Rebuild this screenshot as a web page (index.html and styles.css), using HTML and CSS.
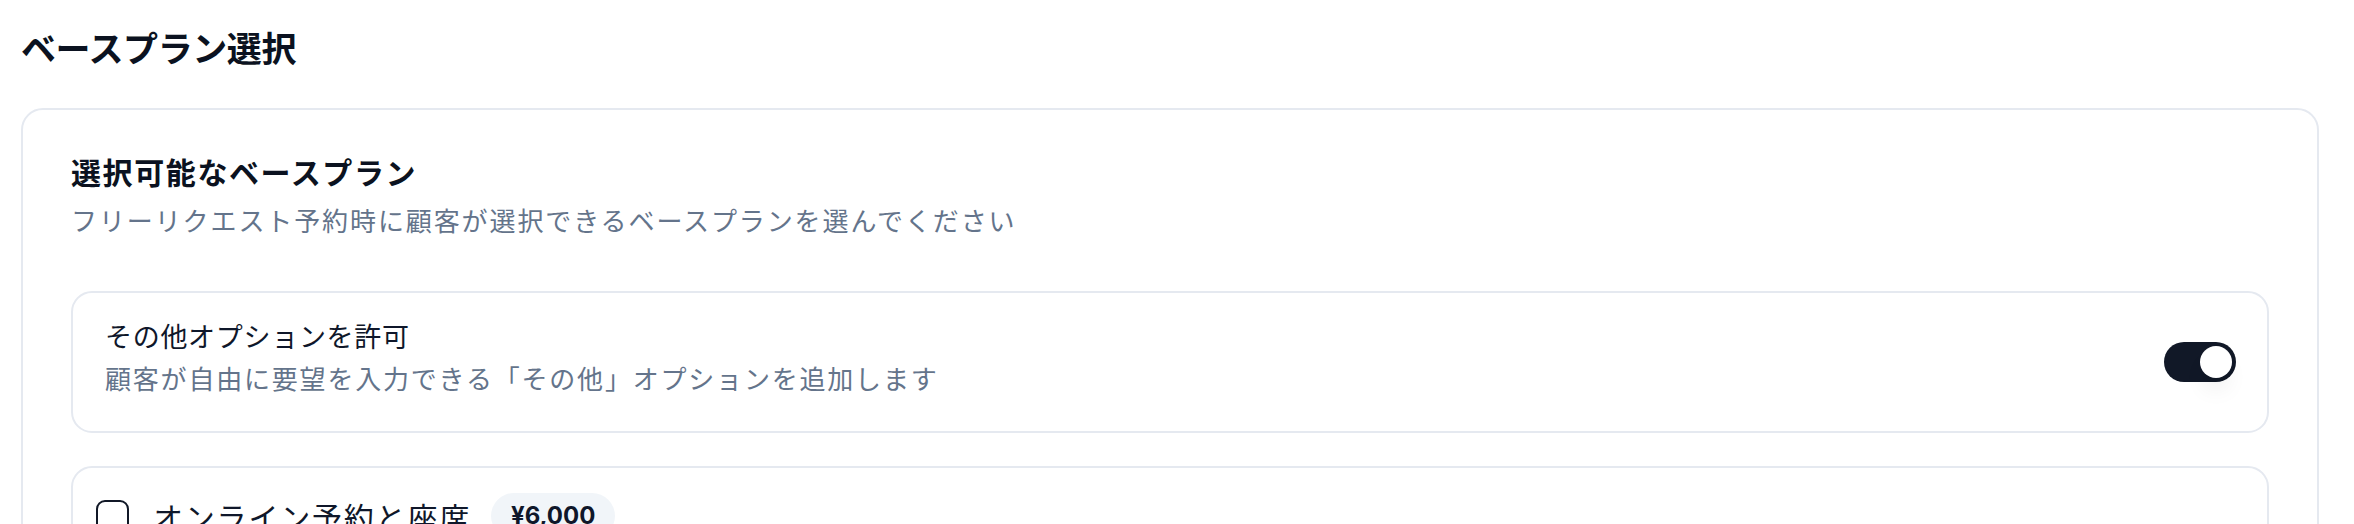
FILE: index.html
```html
<!DOCTYPE html>
<html lang="ja">
<head>
<meta charset="utf-8">
<title>ベースプラン選択</title>
<link rel="stylesheet" href="styles.css">
</head>
<body>
<main class="page">
  <h1 class="page-title">ベースプラン選択</h1>
  <section class="card">
    <h2 class="card-title">選択可能なベースプラン</h2>
    <p class="card-sub">フリーリクエスト予約時に顧客が選択できるベースプランを選んでください</p>

    <div class="option-box">
      <div class="option-text">
        <div class="option-title">その他オプションを許可</div>
        <div class="option-desc">顧客が自由に要望を入力できる「その他」オプションを追加します</div>
      </div>
      <div class="toggle on" role="switch" aria-checked="true"><span class="thumb"></span></div>
    </div>

    <div class="plan-box">
      <div class="plan-row">
        <span class="checkbox"></span>
        <span class="plan-name">オンライン予約と座席</span>
        <span class="badge">¥6,000</span>
      </div>
    </div>
  </section>
</main>
</body>
</html>
```

FILE: styles.css
```css
html, body {
  margin: 0;
  padding: 0;
  background: #ffffff;
  overflow: hidden;
}

body {
  font-family: "Noto Sans CJK JP", "Noto Sans", sans-serif;
  color: #0f172a;
}

.page {
  padding: 22px 0 0 21px;
  width: 2298px;
}

.page-title {
  margin: 0 0 36px 0;
  font-size: 35px;
  line-height: 50px;
  font-weight: 700;
  letter-spacing: -0.4px;
  color: #0b1220;
}

.card {
  border: 2px solid #e5e9f0;
  border-radius: 22px;
  padding: 41px 48px 48px 48px;
  background: #ffffff;
}

.card-title {
  margin: 0;
  font-size: 30px;
  line-height: 40px;
  font-weight: 700;
  letter-spacing: 1.6px;
  color: #0b1220;
}

.card-sub {
  margin: 10px 0 52px 0;
  font-size: 26px;
  line-height: 38px;
  letter-spacing: 1.9px;
  color: #64748b;
}

.option-box {
  height: 142px;
  box-sizing: border-box;
  border: 2px solid #e5e9f0;
  border-radius: 21px;
  padding: 0 31px 0 32px;
  display: flex;
  align-items: center;
  justify-content: space-between;
}

.option-text {
  padding-bottom: 10px;
}

.option-title {
  font-size: 27px;
  line-height: 42px;
  letter-spacing: 0.7px;
  color: #0f172a;
}

.option-desc {
  font-size: 26px;
  line-height: 42px;
  letter-spacing: 1.8px;
  color: #64748b;
}

.toggle {
  width: 72px;
  height: 40px;
  box-sizing: border-box;
  border-radius: 20px;
  background: #111827;
  padding: 4px;
  display: flex;
  justify-content: flex-end;
  align-items: center;
}

.thumb {
  width: 32px;
  height: 32px;
  border-radius: 50%;
  background: #ffffff;
  box-shadow: 0 15px 22px -4px rgba(0, 0, 0, 0.08), 0 6px 9px -6px rgba(0, 0, 0, 0.08);
}

.plan-box {
  margin-top: 33px;
  border: 2px solid #e5e9f0;
  border-radius: 21px;
  padding: 25px 23px;
}

.plan-row {
  display: flex;
  align-items: center;
  height: 46px;
}

.checkbox {
  width: 33px;
  height: 33px;
  box-sizing: border-box;
  border: 2.5px solid #111827;
  border-radius: 9px;
  margin-right: 24px;
  flex: none;
}

.plan-name {
  font-size: 30px;
  line-height: 46px;
  letter-spacing: 1.8px;
  color: #0f172a;
}

.badge {
  margin-left: 20px;
  height: 46px;
  line-height: 46px;
  padding: 0 20px;
  border-radius: 23px;
  background: #f1f5f9;
  font-family: "Inter", "Liberation Sans", sans-serif;
  font-size: 24px;
  font-weight: 700;
  color: #0f172a;
}
```
